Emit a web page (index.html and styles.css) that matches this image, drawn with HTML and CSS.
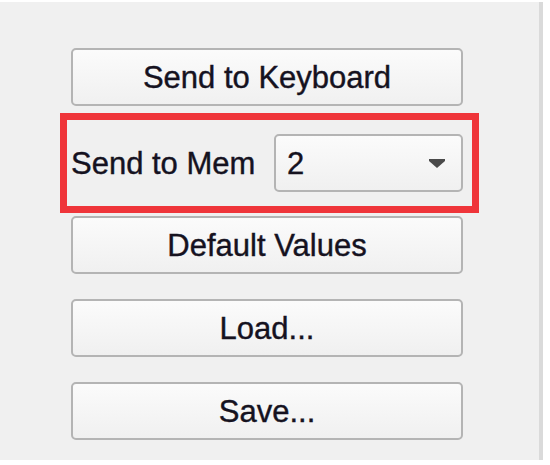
FILE: index.html
```html
<!DOCTYPE html>
<html>
<head>
<meta charset="utf-8">
<link rel="stylesheet" href="styles.css">
</head>
<body>
<div class="panel">
  <div class="stack">
    <div class="btn">Send to Keyboard</div>
    <div class="highlight">
      <span class="label">Send to Mem</span>
      <div class="combo">
        <span class="combo-value">2</span>
        <svg class="combo-arrow" width="16" height="9" viewBox="0 0 16 9"><path d="M0 0 H16 V2 L8 9 L0 2 Z" fill="#4a4a4a"/></svg>
      </div>
    </div>
    <div class="btn btn-after-box">Default Values</div>
    <div class="btn btn-spaced">Load...</div>
    <div class="btn btn-spaced">Save...</div>
  </div>
</div>
</body>
</html>
```

FILE: styles.css
```css
html, body {
  margin: 0;
  padding: 0;
  background: #ffffff;
}

body {
  font-family: "Liberation Sans", Arial, sans-serif;
  font-size: 31px;
  color: #15121f;
  -webkit-text-stroke: 0.4px #15121f;
}

.panel {
  box-sizing: border-box;
  width: 543px;
  height: 458px;
  margin-top: 2px;
  background: #f0f0f0;
  border-right: 4px solid #dadada;
  padding-top: 46px;
}

.stack {
  display: flex;
  flex-direction: column;
  width: 392px;
  margin-left: 71px;
}

.btn {
  box-sizing: border-box;
  height: 58px;
  border: 2px solid #b4b4b4;
  border-radius: 5px;
  background: linear-gradient(#fbfbfb, #f0f0f0);
  display: flex;
  align-items: center;
  justify-content: center;
  line-height: 1;
}

.highlight {
  box-sizing: border-box;
  width: 419px;
  height: 100px;
  margin-top: 7px;
  margin-left: -11px;
  border: 7px solid #ef353a;
  display: flex;
  align-items: center;
  justify-content: space-between;
  padding-left: 4px;
  padding-right: 9px;
}

.label {
  line-height: 1;
}

.combo {
  box-sizing: border-box;
  width: 189px;
  height: 58px;
  border: 2px solid #b4b4b4;
  border-radius: 5px;
  background: linear-gradient(#fbfbfb, #f0f0f0);
  display: flex;
  align-items: center;
  justify-content: space-between;
  padding-left: 11px;
  padding-right: 16px;
}

.combo-value {
  line-height: 1;
}

.combo-arrow {
  display: block;
}

.btn-after-box {
  margin-top: 3px;
}

.btn-spaced {
  margin-top: 25px;
}
```
